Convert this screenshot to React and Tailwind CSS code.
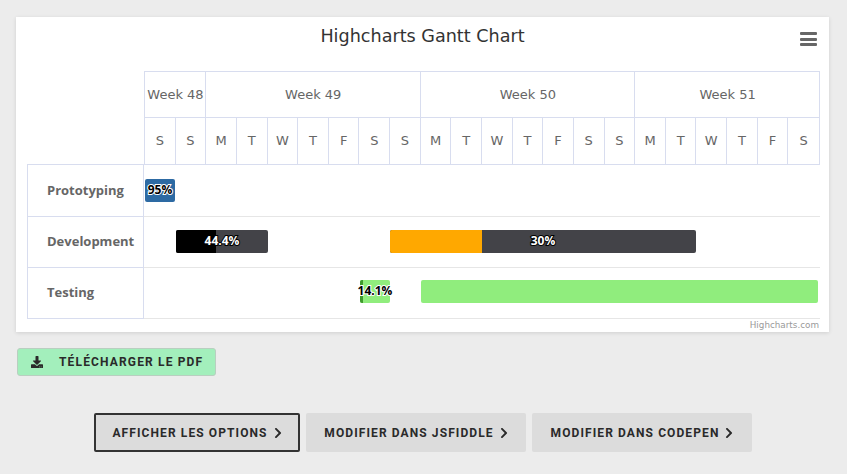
import React from "react";
import { FaDownload, FaChevronRight } from "react-icons/fa";

const days = ["S","S","M","T","W","T","F","S","S","M","T","W","T","F","S","S","M","T","W","T","F","S"];
const weeks = [["Week 48", 61], ["Week 49", 215], ["Week 50", 215], ["Week 51", 184]];

function Label({ children, dark }) {
  return (
    <span
      className={`absolute inset-0 flex items-center justify-center whitespace-nowrap font-['Open_Sans',sans-serif] text-[12px] font-bold ${dark ? "text-black" : "text-white"}`}
      style={{ WebkitTextStroke: dark ? "2px #ffffff" : "2px #000000", paintOrder: "stroke fill" }}
    >
      {children}
    </span>
  );
}

function Row({ name, children, height, barClass }) {
  return (
    <div className="flex" style={{ height }}>
      <div className="w-[117px] shrink-0 border-x border-b border-[#d8ddef] pl-[19px] flex items-center font-['Open_Sans',sans-serif] text-[13px] font-bold text-[#666666]">
        {name}
      </div>
      <div className={`flex-1 flex items-center border-b border-[#e6e6e6] ${barClass}`}>{children}</div>
    </div>
  );
}

function PageButton({ children, active, className }) {
  return (
    <button className={`h-[39px] flex items-center justify-center gap-[4px] pl-[2px] rounded-[2px] bg-[#dcdcdc] text-[12px] font-bold uppercase tracking-[1.1px] text-[#2a2a2a] ${active ? "border-2 border-[#333333]" : ""} ${className}`}>
      {children}
      <FaChevronRight className="text-[12px]" />
    </button>
  );
}

export default function App() {
  return (
    <div className="w-[847px] h-[474px] overflow-hidden bg-[#ececec] pt-[17px] font-['Roboto',sans-serif]">
      <div className="ml-[16px] w-[813px] h-[315px] bg-white shadow-[0_1px_4px_rgba(0,0,0,0.12)] font-['DejaVu_Sans',sans-serif] relative">
        <div className="h-[54px] pt-[7px] text-center text-[17.6px] leading-[24px] text-[#333333]">Highcharts Gantt Chart</div>
        <div className="absolute left-[784px] top-[15px] w-[17px] flex flex-col gap-[2.5px]">
          <div className="h-[3px] rounded-[1px] bg-[#666666]" />
          <div className="h-[3px] rounded-[1px] bg-[#666666]" />
          <div className="h-[3px] rounded-[1px] bg-[#666666]" />
        </div>

        <div className="ml-[11px] w-[793px]">
          <div className="ml-[117px] border-t border-l border-r border-[#d8ddef] text-[#666666]">
            <div className="flex h-[46px]">
              {weeks.map(([w, width]) => (
                <div key={w} style={{ width }} className="border-r border-b border-[#d8ddef] last:border-r-0 flex items-center justify-center pl-[1px] text-[13px]">
                  {w}
                </div>
              ))}
            </div>
            <div className="grid grid-cols-[repeat(22,minmax(0,1fr))] h-[46px]">
              {days.map((d, i) => (
                <div key={i} className="border-r border-[#d8ddef] last:border-r-0 flex items-center justify-center text-[13px]">
                  {d}
                </div>
              ))}
            </div>
          </div>

          <div className="border-t border-[#d8ddef]">
            <Row name="Prototyping" height={52} barClass="pb-[1px]">
              <div className="relative ml-[1px] w-[30px] h-[23px] rounded-[2px] bg-[#2d6aa3]">
                <Label dark>95%</Label>
              </div>
            </Row>
            <Row name="Development" height={51} barClass="pb-[2px]">
              <div className="relative ml-[32px] w-[92px] h-[23px] rounded-[2px] overflow-hidden bg-[#434348] flex">
                <div className="w-[40px] bg-black" />
                <Label>44.4%</Label>
              </div>
              <div className="relative ml-[122px] w-[306px] h-[23px] rounded-[2px] overflow-hidden bg-[#434348] flex">
                <div className="w-[92px] bg-[#ffa800]" />
                <Label>30%</Label>
              </div>
            </Row>
            <Row name="Testing" height={51} barClass="pb-[4px]">
              <div className="relative ml-[216px] w-[30px] h-[23px] rounded-[2px] bg-[#90ed7d] flex">
                <div className="w-[3px] rounded-l-[2px] bg-[#3f9a2d]" />
                <Label dark>14.1%</Label>
              </div>
              <div className="ml-[31px] w-[397px] h-[23px] rounded-[2px] bg-[#90ed7d]" />
            </Row>
          </div>
        </div>
        <div className="pr-[10px] pt-[1px] text-right text-[8.8px] leading-[11px] text-[#999999]">Highcharts.com</div>
      </div>

      <button className="ml-[17px] mt-[16px] w-[199px] h-[28px] flex items-center rounded-[3px] border border-[#b9cfc0] bg-[#a3efbc] pl-[13px] text-[12px] font-bold uppercase tracking-[1.15px] text-[#2a2a2a]">
        <FaDownload className="text-[12px]" />
        <span className="ml-[16px]">Télécharger le PDF</span>
      </button>

      <div className="mt-[37px] flex justify-center gap-[6px] pr-[1px]">
        <PageButton active className="w-[206px]">Afficher les options</PageButton>
        <PageButton className="w-[220px]">Modifier dans JSFiddle</PageButton>
        <PageButton className="w-[220px]">Modifier dans CodePen</PageButton>
      </div>
    </div>
  );
}
